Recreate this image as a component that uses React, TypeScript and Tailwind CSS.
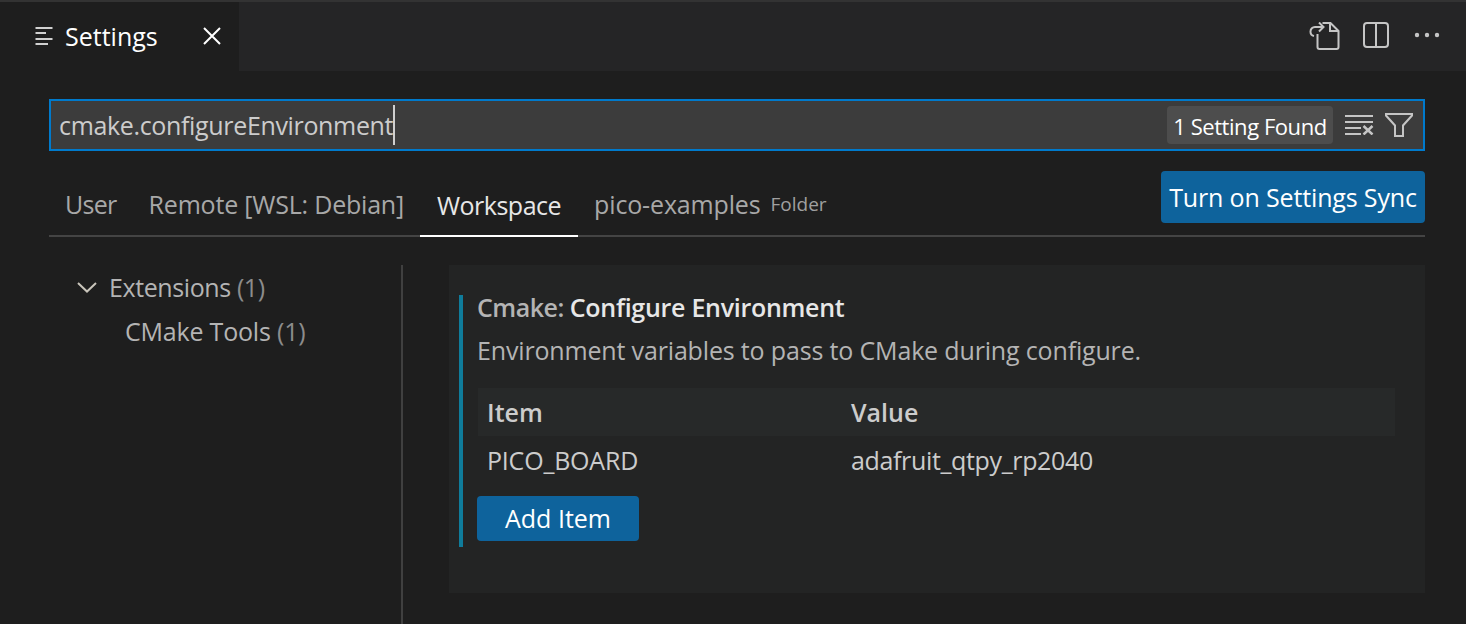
import React from "react";

const font = { fontFamily: '"Open Sans", "Noto Sans", sans-serif' };

function ListIcon() {
  return (
    <svg width="18" height="18" viewBox="0 0 18 18" className="block">
      <g fill="#d0d0d0">
        <rect x="0.500" y="0" width="17" height="2" />
        <rect x="0.500" y="5" width="10.500" height="2" />
        <rect x="0.500" y="11" width="17" height="2" />
        <rect x="0.500" y="16" width="12.500" height="2" />
      </g>
    </svg>
  );
}

function CloseIcon() {
  return (
    <svg width="18" height="18" viewBox="0 0 18 18" className="block">
      <path d="M1 1L17 17M17 1L1 17" stroke="#fff" strokeWidth="2" fill="none" />
    </svg>
  );
}

function OpenJsonIcon() {
  return (
    <svg width="31" height="28" viewBox="0 0 31 28" className="block" fill="none" stroke="#c5c5c5" strokeWidth="2">
      <path d="M8.500 12v13a2 2 0 0 0 2 2h17a2 2 0 0 0 2-2V9l-8-8h-8" />
      <path d="M21 1v8h8.500" />
      <path d="M5 14a4.500 4.500 0 0 1-3.500-4.500A4.500 4.500 0 0 1 6 5h8.500M10 0.500l4.500 4.500L10 9.500" />
    </svg>
  );
}

function SplitIcon() {
  return (
    <svg width="26" height="26" viewBox="0 0 26 26" className="block" fill="none" stroke="#c5c5c5" strokeWidth="2">
      <rect x="1" y="1" width="24" height="24" rx="3" />
      <path d="M13 1v24" />
    </svg>
  );
}

function MoreIcon() {
  return (
    <svg width="26" height="6" viewBox="0 0 26 6" className="block" fill="#c5c5c5">
      <circle cx="3" cy="3" r="2.2" />
      <circle cx="13" cy="3" r="2.2" />
      <circle cx="23" cy="3" r="2.2" />
    </svg>
  );
}

function ClearIcon() {
  return (
    <svg width="29" height="20" viewBox="0 0 29 20" className="block" fill="none" stroke="#c5c5c5" strokeWidth="2">
      <path d="M0 1h28M0 7h28M0 13h16M0 19h16" />
      <path d="M18.500 11l9 8.500M27.500 11l-9 8.500" strokeWidth="2.500" />
    </svg>
  );
}

function FilterIcon() {
  return (
    <svg width="28" height="24" viewBox="0 0 28 24" className="block" fill="none" stroke="#c5c5c5" strokeWidth="2">
      <path d="M1 1H27V2.500L18 12.500V23H10V12.500L1 2.500Z" />
    </svg>
  );
}

function Chevron() {
  return (
    <svg width="20" height="11" viewBox="0 0 20 11" className="block" fill="none" stroke="#c9c5bb" strokeWidth="2">
      <path d="M1 1L10 9.500L19 1" />
    </svg>
  );
}

export default function App() {
  return (
    <div style={font} className="w-[1466px] h-[624px] overflow-hidden bg-[#1e1e1e] text-[#cccccc] text-[25px] leading-none">
      <div className="h-[2px] bg-[#333333]" />
      <div className="flex h-[69px] items-stretch justify-between bg-[#252526]">
        <div className="flex w-[239px] items-center bg-[#1e1e1e] pl-[35px] pb-[1px]">
          <ListIcon />
          <span className="ml-[12px] text-white">Settings</span>
          <span className="ml-[45px]"><CloseIcon /></span>
        </div>
        <div className="flex items-center pr-[26px] pb-[3px]">
          <span className="mt-[1px]"><OpenJsonIcon /></span>
          <span className="ml-[23px]"><SplitIcon /></span>
          <span className="ml-[25px]"><MoreIcon /></span>
        </div>
      </div>

      <div className="px-[41px] pl-[49px]">
        <div className="mt-[28px] flex h-[52px] items-center justify-between border-2 border-[#007acc] bg-[#3c3c3c] pl-[8px] pr-[10px]">
          <div className="flex items-center">
            <span className="tracking-[-0.34px] text-[#cccccc]">cmake.configureEnvironment</span>
            <span className="h-[40px] w-[2px] bg-[#cfcfcf]" />
          </div>
          <div className="flex items-center">
            <span className="flex h-[38px] w-[166px] items-center justify-center rounded-[4px] bg-[#4d4d4d] pt-[1px] text-[22px] tracking-[-0.45px] text-white">1 Setting Found</span>
            <span className="ml-[12px]"><ClearIcon /></span>
            <span className="ml-[11px]"><FilterIcon /></span>
          </div>
        </div>

        <div className="mt-[20px] flex h-[66px] items-stretch justify-between border-b-2 border-[#444444]">
          <div className="flex items-stretch">
            <div className="flex items-center pl-[16px] pr-[16px] pt-[2px] tracking-[-0.7px] text-[#a8a8a8]">User</div>
            <div className="flex items-center px-[16px] pt-[2px] tracking-[-0.2px] text-[#a8a8a8]">Remote [WSL: Debian]</div>
            <div className="-mb-[2px] flex items-center border-b-2 border-white px-[17px] pt-[4px] tracking-[-0.5px] text-[#e7e7e7]">Workspace</div>
            <div className="flex items-center pl-[16px] pt-[2px] text-[#a8a8a8]">
              <span className="tracking-[-0.15px]">pico-examples</span>
              <span className="ml-[10px] text-[19px] text-[#a0a0a0]">Folder</span>
            </div>
          </div>
          <div className="flex h-[52px] w-[264px] items-center justify-center rounded-[4px] bg-[#0e639c] tracking-[-0.15px] text-white">Turn on Settings Sync</div>
        </div>

        <div className="mt-[28px] flex items-stretch">
          <div className="h-[400px] w-[354px] border-r-2 border-[#404040] text-[#b4b4b4]">
            <div className="flex h-[44px] items-center pl-[28px]">
              <Chevron />
              <span className="ml-[12px] tracking-[-0.4px]">Extensions <span className="text-[#8c8c8c]">(1)</span></span>
            </div>
            <div className="flex h-[44px] items-center pl-[76px]">
              <span className="tracking-[-0.2px]">CMake Tools <span className="text-[#8c8c8c]">(1)</span></span>
            </div>
          </div>
          <div className="ml-[46px] h-[328px] flex-1 bg-[#232424] pl-[10px] pt-[30px]">
            <div className="h-[252px] border-l-4 border-[#0f7c9b] pl-[14px]">
              <div className="flex h-[24px] items-center">
                <span className="font-semibold tracking-[-0.5px] text-[#b4b4b4]">Cmake:&nbsp;</span>
                <span className="font-semibold tracking-[-0.28px] text-[#e7e7e7]">Configure Environment</span>
              </div>
              <div className="mt-[17px] flex h-[28px] items-center tracking-[-0.16px] text-[#b4b4b4]">Environment variables to pass to CMake during configure.</div>
              <div className="mt-[24px] mr-[30px] ml-[1px] flex h-[48px] items-center bg-[#272929] pl-[9px] font-semibold text-[#cccccc]">
                <span className="w-[364px]">Item</span>
                <span>Value</span>
              </div>
              <div className="ml-[1px] flex h-[49px] items-center pl-[9px] text-[#cccccc]">
                <span className="w-[364px] tracking-[-0.2px]">PICO_BOARD</span>
                <span className="tracking-[-0.35px]">adafruit_qtpy_rp2040</span>
              </div>
              <div className="mt-[11px] flex h-[45px] w-[162px] items-center justify-center rounded-[4px] bg-[#0e639c] text-white">Add Item</div>
            </div>
          </div>
        </div>
      </div>
    </div>
  );
}
